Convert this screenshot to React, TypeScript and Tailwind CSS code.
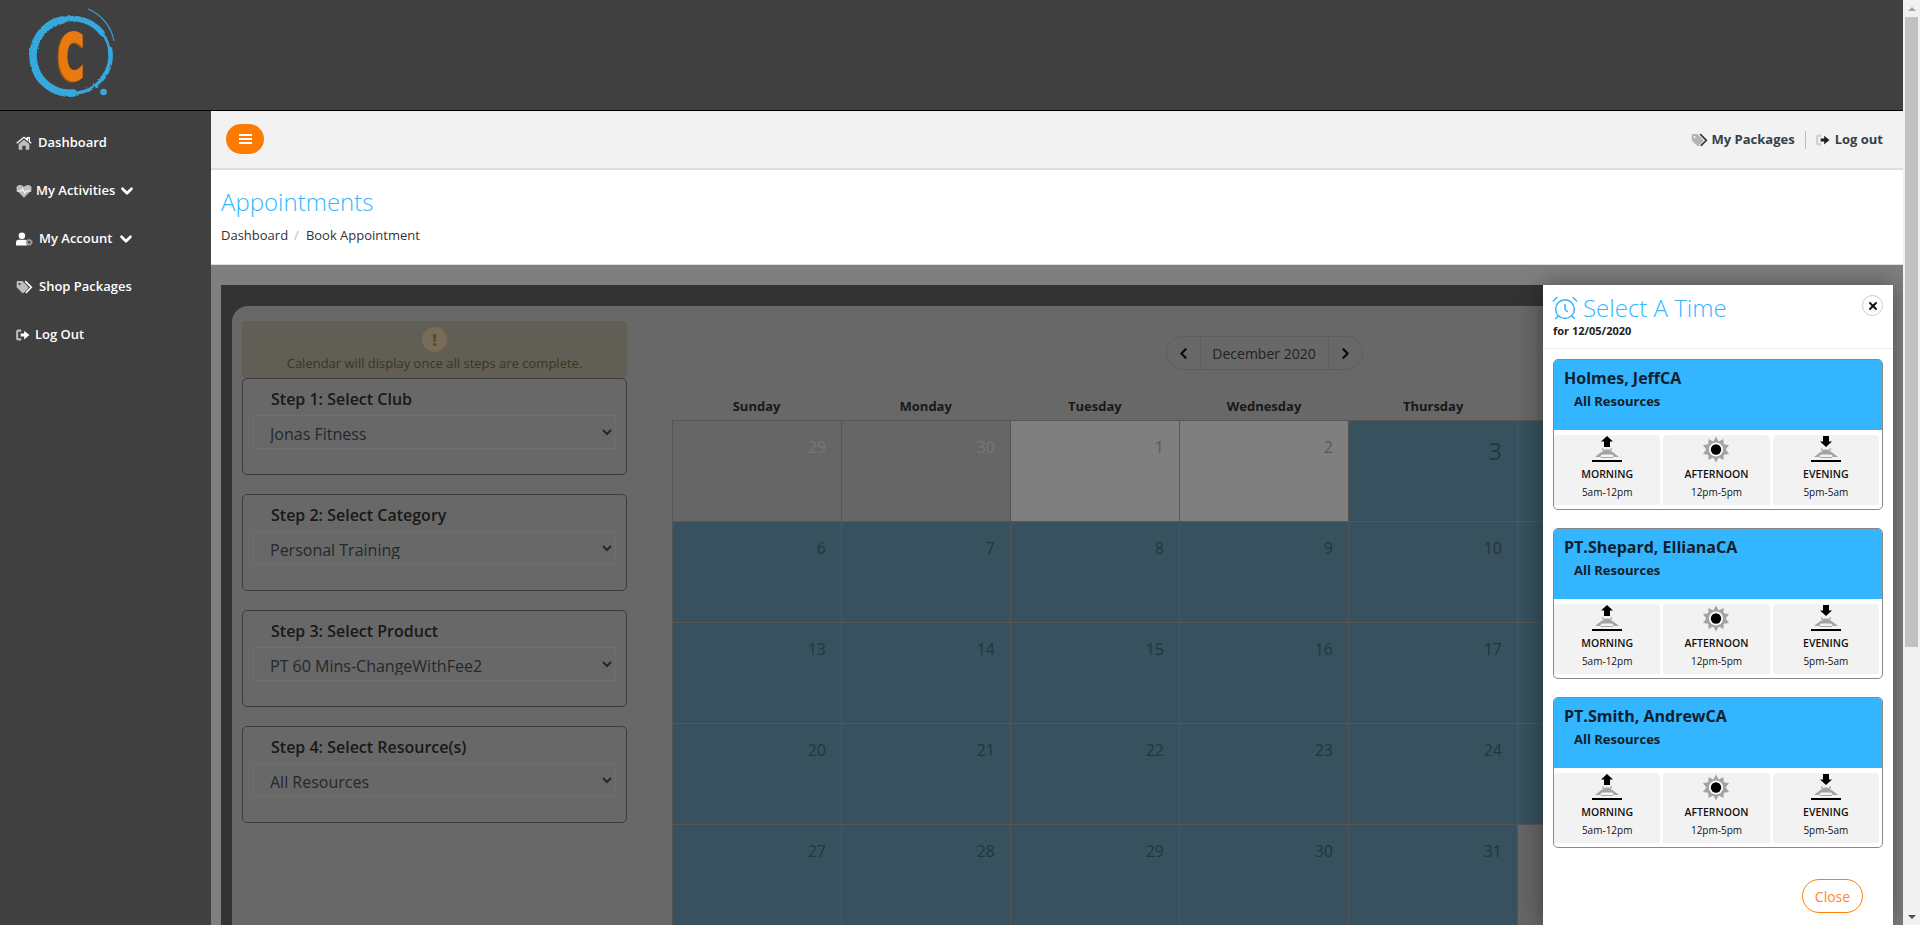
import React from "react";
import { AlarmClock, ChevronDown, ChevronLeft, ChevronRight, X } from "lucide-react";

function HomeIcon() {
  return (
    <svg viewBox="0 0 24 20" className="w-[16px] h-[14px]">
      <path d="M12 5 L20 11.500 V19 a1 1 0 0 1-1 1 H14.500 V14 H9.500 V20 H5 a1 1 0 0 1-1-1 V11.500 Z" fill="#bdbdbd" />
      <path d="M1 10.500 L12 1.500 L17 5.500 V2 H20 V8 L23 10.500" fill="none" stroke="#ffffff" strokeWidth="2" />
    </svg>
  );
}
function HeartIcon() {
  return (
    <svg viewBox="0 0 24 20" className="w-[16px] h-[14px]">
      <path d="M12 20 L2 10 C-1 6 1 1 6 1 C9 1 11 2.500 12 4 C13 2.500 15 1 18 1 C23 1 25 6 22 10 Z" fill="#bdbdbd" />
      <path d="M1 10 H8 L10 7 L13 13 L15 10 H23" fill="none" stroke="#ffffff" strokeWidth="1.600" />
    </svg>
  );
}
function UserCogIcon() {
  return (
    <svg viewBox="0 0 26 20" className="w-[17px] h-[14px]">
      <circle cx="9" cy="5" r="5" fill="#ffffff" />
      <path d="M0 20 V15 a4 4 0 0 1 4-4 H14 a4 4 0 0 1 3 1.500 V20 Z" fill="#ffffff" />
      <circle cx="20" cy="15" r="3.200" fill="none" stroke="#9a9a9a" strokeWidth="2.600" />
      <circle cx="20" cy="15" r="5" fill="none" stroke="#9a9a9a" strokeWidth="1.400" strokeDasharray="2 1.900" />
    </svg>
  );
}
function TagsIcon({ edge, fill }: { edge: string; fill: string }) {
  return (
    <svg viewBox="0 0 26 20" className="w-[17px] h-[14px]">
      <path fillRule="evenodd" d="M1 3 a2 2 0 0 1 2-2 H10 L18.500 9.500 a2 2 0 0 1 0 2.800 L12 18.800 a2 2 0 0 1-2.800 0 L1 10.500 Z M5.500 4 a1.500 1.500 0 1 0 .01 0 Z" fill={fill} />
      <path d="M14 1 L23.500 10.500 L15 19" fill="none" stroke={edge} strokeWidth="2.400" />
    </svg>
  );
}
function LogoutIcon({ arrow, bracket }: { arrow: string; bracket: string }) {
  return (
    <svg viewBox="0 0 24 20" className="w-[14px] h-[12px]">
      <path d="M9 2.500 H3.500 a1.500 1.500 0 0 0-1.500 1.500 V16 a1.500 1.500 0 0 0 1.500 1.500 H9" fill="none" stroke={bracket} strokeWidth="3.500" />
      <path d="M8 7.500 H14 V2.500 L23 10 L14 17.500 V12.500 H8 Z" fill={arrow} />
    </svg>
  );
}
function Logo() {
  const c = "#36a8de";
  return (
    <svg viewBox="0 0 100 100" className="w-[100px] h-[100px] shrink-0 ml-[24px] mt-[3px]">
      <defs>
        <filter id="rough" x="-10%" y="-10%" width="120%" height="120%">
          <feTurbulence type="fractalNoise" baseFrequency="0.25" numOctaves="2" seed="4" />
          <feDisplacementMap in="SourceGraphic" scale="2.500" />
        </filter>
      </defs>
      <g fill="none" stroke={c} strokeLinecap="round" filter="url(#rough)">
        <path d="M49 90 A37 37 0 0 1 38 17" strokeWidth="7.500" />
        <path d="M38 17 A37 37 0 0 1 78 30" strokeWidth="5.500" />
        <path d="M78 30 A37 37 0 0 1 86 53" strokeWidth="2.500" />
        <path d="M86 46 A37 37 0 0 1 78 76" strokeWidth="4.500" />
        <path d="M78 76 A37 37 0 0 1 49 90" strokeWidth="3.500" />
      </g>
      <path d="M64 6 A43 43 0 0 1 90 38" fill="none" stroke={c} strokeWidth="1.100" />
      <circle cx="79.500" cy="89" r="3.300" fill={c} />
      <text
        transform="translate(47 76) scale(0.58 1)"
        textAnchor="middle"
        fontFamily="'DejaVu Sans', sans-serif"
        fontWeight="700"
        fontSize="62"
        fill="#e87a10"
        stroke="#e87a10"
        strokeWidth="3"
        className="drop-shadow-[-2px_1px_0_#a9560f]"
      >
        C
      </text>
    </svg>
  );
}
function MorningIcon({ down }: { down?: boolean }) {
  return (
    <svg viewBox="0 0 30 27" className="w-[30px] h-[27px]">
      {down ? (
        <path d="M15 11 L21 5.500 H18 V0 H12 V5.500 H9 Z" fill="#000" />
      ) : (
        <path d="M15 0 L21 5.500 H18 V11 H12 V5.500 H9 Z" fill="#000" />
      )}
      <path d="M9.500 18.500 a5.500 5 0 0 1 11 0 Z" fill="#a3a3a3" />
      <path d="M3 21 L10 15.500 L12 17.500 L9 19 L8.500 21 Z M27 21 L20 15.500 L18 17.500 L21 19 L21.500 21 Z M9 21 H21 V22 H9 Z M10 11.500 L12.500 14 L10.500 15 Z M20 11.500 L17.500 14 L19.500 15 Z" fill="#a3a3a3" />
      <rect x="0" y="24" width="30" height="2" fill="#000" />
    </svg>
  );
}
function SunIcon() {
  return (
    <svg viewBox="0 0 28 27" className="w-[28px] h-[27px]">
      <path d="M14 0.500 L16.700 5.500 L21.500 3 L21.700 8.300 L27 9 L23.800 13.500 L27 18 L21.700 18.700 L21.500 24 L16.700 21.500 L14 26.500 L11.300 21.500 L6.500 24 L6.300 18.700 L1 18 L4.200 13.500 L1 9 L6.300 8.300 L6.500 3 L11.300 5.500 Z" fill="#a3a3a3" />
      <circle cx="14" cy="13.500" r="7" fill="#ffffff" />
      <circle cx="14" cy="13.500" r="5.200" fill="#000" />
    </svg>
  );
}

const navItems = [
  { label: "Dashboard", icon: <HomeIcon />, gap: "gap-[6px]", chev: false },
  { label: "My Activities", icon: <HeartIcon />, gap: "gap-[4px]", chev: true },
  { label: "My Account", icon: <UserCogIcon />, gap: "gap-[6px]", chev: true },
  { label: "Shop Packages", icon: <TagsIcon edge="#ffffff" fill="#bdbdbd" />, gap: "gap-[6px]", chev: false },
  { label: "Log Out", icon: <LogoutIcon arrow="#ffffff" bracket="#bdbdbd" />, gap: "gap-[5px]", chev: false },
];

function Sidebar() {
  return (
    <aside className="w-[211px] shrink-0 bg-[#404040] pt-[8px]">
      {navItems.map((n) => (
        <div key={n.label} className={`h-[48px] flex items-center pl-[16px] text-white text-[13px] font-semibold ${n.gap}`}>
          {n.icon}
          <span>{n.label}</span>
          {n.chev && <ChevronDown className="w-[18px] h-[18px] -ml-[1px]" strokeWidth={3.500} />}
        </div>
      ))}
    </aside>
  );
}

const steps = [
  { title: "Step 1: Select Club", value: "Jonas Fitness" },
  { title: "Step 2: Select Category", value: "Personal Training" },
  { title: "Step 3: Select Product", value: "PT 60 Mins-ChangeWithFee2" },
  { title: "Step 4: Select Resource(s)", value: "All Resources" },
];

function StepBox({ title, value }: { title: string; value: string }) {
  return (
    <div className="h-[97px] border border-[#777] rounded-[5px] px-[10px] pt-[7px] mb-[19px]">
      <div className="text-[16px] leading-[26px] font-semibold text-[#333] pl-[18px]">{title}</div>
      <select
        defaultValue={value}
        className="block w-full h-[34px] mt-[3px] border border-[#dcdcdc] bg-transparent text-[16px] text-[#495057] pl-[12px] pt-[6px] pb-[5px] outline-none [font-family:inherit]"
      >
        <option>{value}</option>
      </select>
    </div>
  );
}

function LeftPanel() {
  return (
    <div className="w-[385px] shrink-0 ml-[10px] pt-[15px]">
      <div className="h-[57px] bg-[#c2bcaa] rounded-[4px] flex flex-col items-center pt-[6px]">
        <div className="w-[25px] h-[25px] rounded-full bg-[#f0d6ae] flex items-center justify-center text-[#a08862] text-[16px] font-bold leading-none">!</div>
        <div className="text-[13px] leading-[18px] mt-[2px] text-[#7a6a48]">Calendar will display once all steps are complete.</div>
      </div>
      {steps.map((s) => (
        <StepBox key={s.title} {...s} />
      ))}
    </div>
  );
}

type Day = { n: number | null; kind: "off" | "plain" | "open"; big?: boolean };
const days: Day[] = [
  { n: 29, kind: "off" }, { n: 30, kind: "off" }, { n: 1, kind: "plain" }, { n: 2, kind: "plain" }, { n: 3, kind: "open", big: true }, { n: null, kind: "open" }, { n: null, kind: "open" },
  { n: 6, kind: "open" }, { n: 7, kind: "open" }, { n: 8, kind: "open" }, { n: 9, kind: "open" }, { n: 10, kind: "open" }, { n: null, kind: "open" }, { n: null, kind: "open" },
  { n: 13, kind: "open" }, { n: 14, kind: "open" }, { n: 15, kind: "open" }, { n: 16, kind: "open" }, { n: 17, kind: "open" }, { n: null, kind: "open" }, { n: null, kind: "open" },
  { n: 20, kind: "open" }, { n: 21, kind: "open" }, { n: 22, kind: "open" }, { n: 23, kind: "open" }, { n: 24, kind: "open" }, { n: null, kind: "open" }, { n: null, kind: "open" },
  { n: 27, kind: "open" }, { n: 28, kind: "open" }, { n: 29, kind: "open" }, { n: 30, kind: "open" }, { n: 31, kind: "open" }, { n: null, kind: "off" }, { n: null, kind: "off" },
];

function Cell({ d }: { d: Day }) {
  const bg = d.kind === "off" ? "bg-[#cccccc] text-[#eeeeee]" : d.kind === "plain" ? "bg-white text-[#b5b5b5]" : "bg-[#6ea2bc] text-[#4a6a7c]";
  return (
    <div className={`h-[101px] border-r border-b border-[#aaaaaa] text-right pr-[15px] ${bg} ${d.big ? "text-[24px] leading-[54px] pr-[14px] pt-[3px]" : "text-[16px] leading-[24px] pt-[14px]"}`}>
      {d.n}
    </div>
  );
}

function Calendar() {
  return (
    <div className="w-[1184px] shrink-0 ml-[45px] pt-[30px]">
      <div className="flex justify-center">
        <div className="flex h-[34px] border border-[#bbbbbb] rounded-full text-[#444] text-[14px] items-stretch">
          <div className="w-[33px] flex items-center justify-center text-[#111]"><ChevronLeft className="w-[17px] h-[17px]" strokeWidth={3} /></div>
          <div className="w-[129px] flex items-center justify-center border-x border-[#bbbbbb]">December 2020</div>
          <div className="w-[33px] flex items-center justify-center text-[#111]"><ChevronRight className="w-[17px] h-[17px]" strokeWidth={3} /></div>
        </div>
      </div>
      <div className="grid grid-cols-7 mt-[26px] h-[24px] text-center text-[13px] font-bold leading-[20px] text-[#333]">
        {["Sunday", "Monday", "Tuesday", "Wednesday", "Thursday"].map((d) => (
          <div key={d}>{d}</div>
        ))}
      </div>
      <div className="grid grid-cols-7 border-t border-l border-[#aaaaaa]">
        {days.map((d, i) => (
          <Cell key={i} d={d} />
        ))}
      </div>
    </div>
  );
}

function Tile({ icon, label, hours }: { icon: React.ReactNode; label: string; hours: string }) {
  return (
    <div className="flex-1 bg-[#f2f2f2] rounded-t-[4px] flex flex-col items-center text-[#111]">
      <div className="h-[28px] mt-[1px] flex items-start justify-center">{icon}</div>
      <div className="text-[10.500px] font-semibold leading-[14px] mt-[3px]">{label}</div>
      <div className="text-[10px] leading-[14px] mt-[4px]">{hours}</div>
    </div>
  );
}

function ResourceCard({ name }: { name: string }) {
  return (
    <div className="h-[151px] border border-[#888888] rounded-[5px] overflow-hidden mb-[18px] shrink-0">
      <div className="h-[70px] bg-[#33b5ff] pl-[10px] pt-[6px] text-[#10202c]">
        <div className="text-[16px] leading-[24px] font-bold">{name}</div>
        <div className="text-[13px] leading-[20px] font-bold ml-[10px] mt-[1px]">All Resources</div>
      </div>
      <div className="h-[70px] flex gap-[3px] pr-[3px] mt-[5px]">
        <Tile icon={<MorningIcon />} label="MORNING" hours="5am-12pm" />
        <Tile icon={<SunIcon />} label="AFTERNOON" hours="12pm-5pm" />
        <Tile icon={<MorningIcon down />} label="EVENING" hours="5pm-5am" />
      </div>
    </div>
  );
}

function Modal() {
  return (
    <div className="absolute right-[10px] top-[20px] bottom-0 w-[350px] bg-white shadow-[0_0_25px_rgba(0,0,0,0.4)] flex flex-col">
      <div className="h-[64px] shrink-0 border-b border-[#eeeeee] px-[10px] pt-[9px] relative">
        <div className="flex items-center gap-[4px] h-[28px] text-[#33b5ff]">
          <AlarmClock className="w-[28px] h-[28px] -ml-[2px]" strokeWidth={1.300} />
          <span className="text-[24px] font-light leading-[28px]">Select A Time</span>
        </div>
        <div className="text-[11px] font-bold leading-[14px] mt-[2px] text-[#222]">for 12/05/2020</div>
        <div className="absolute right-[10px] top-[10px] w-[21px] h-[21px] rounded-full border border-[#cccccc] flex items-center justify-center text-[#111]">
          <X className="w-[12px] h-[12px]" strokeWidth={4} />
        </div>
      </div>
      <div className="px-[10px] pt-[10px] flex flex-col">
        <ResourceCard name="Holmes, JeffCA" />
        <ResourceCard name="PT.Shepard, EllianaCA" />
        <ResourceCard name="PT.Smith, AndrewCA" />
      </div>
      <div className="flex justify-end pr-[30px] mt-[13px]">
        <button className="w-[61px] h-[34px] rounded-full border border-[#ff8000] text-[#ff8533] text-[14px] bg-white">Close</button>
      </div>
    </div>
  );
}

function Scrollbar() {
  return (
    <div className="w-[17px] shrink-0 bg-[#f1f1f1] flex flex-col items-center relative">
      <div className="h-[17px] shrink-0 flex items-center justify-center">
        <div className="w-0 h-0 border-x-[4px] border-x-transparent border-b-[4px] border-b-[#a3a3a3]" />
      </div>
      <div className="w-[13px] h-[630px] bg-[#c1c1c1]" />
      <div className="flex-1" />
      <div className="h-[17px] shrink-0 flex items-center justify-center">
        <div className="w-0 h-0 border-x-[4px] border-x-transparent border-t-[4px] border-t-[#505050]" />
      </div>
    </div>
  );
}

export default function App() {
  return (
    <div className="flex h-[925px] overflow-hidden bg-white [font-family:'Open_Sans',sans-serif]">
      <div className="flex-1 min-w-0 flex flex-col">
        <header className="h-[111px] shrink-0 bg-[#404040] border-b border-black flex items-start">
          <Logo />
        </header>
        <div className="flex-1 min-h-0 flex">
          <Sidebar />
          <main className="flex-1 min-w-0 flex flex-col">
            <div className="h-[59px] shrink-0 bg-[#f2f2f2] border-b-2 border-[#dddddd] flex items-center justify-between pl-[15px] pr-[20px]">
              <div className="w-[38px] h-[30px] rounded-full bg-[#ff7a00] flex items-center justify-center mb-[1px]">
                <div className="w-[13px] flex flex-col gap-[2px]">
                  <div className="h-[2px] bg-white" />
                  <div className="h-[2px] bg-white" />
                  <div className="h-[2px] bg-white" />
                </div>
              </div>
              <div className="flex items-center text-[13px] font-bold text-[#34404c]">
                <span className="mr-[4px]"><TagsIcon edge="#333333" fill="#b5b5b5" /></span>
                <span>My Packages</span>
                <span className="w-px h-[18px] bg-[#bbbbbb] mx-[10px]" />
                <span className="mr-[5px]"><LogoutIcon arrow="#222222" bracket="#cfcfcf" /></span>
                <span>Log out</span>
              </div>
            </div>
            <div className="h-[95px] shrink-0 bg-white pl-[10px] pt-[16px] border-b border-[#dddddd]">
              <h1 className="text-[24px] leading-[32px] font-light text-[#33b5ff]">Appointments</h1>
              <div className="flex items-center text-[13px] leading-[18px] mt-[8px] text-[#333]">
                <span>Dashboard</span>
                <span className="text-[#bbbbbb] ml-[6px] mr-[7px]">/</span>
                <span>Book Appointment</span>
              </div>
            </div>
            <section className="flex-1 min-h-0 relative overflow-hidden bg-white pl-[10px] pr-[10px] pt-[20px]">
              <div className="h-[900px] bg-[#666666] px-[11px] pt-[21px]">
                <div className="h-[860px] bg-[#d0d0d0] rounded-t-[16px] flex overflow-hidden">
                  <LeftPanel />
                  <Calendar />
                </div>
              </div>
              <div className="absolute inset-0 bg-black/50" />
              <Modal />
            </section>
          </main>
        </div>
      </div>
      <Scrollbar />
    </div>
  );
}
